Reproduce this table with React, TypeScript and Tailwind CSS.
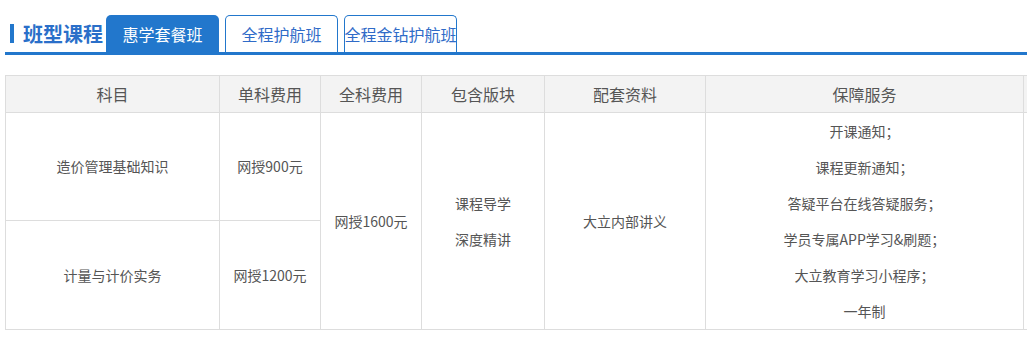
const tabs = ['惠学套餐班', '全程护航班', '全程金钻护航班'];

const services = [
  '开课通知；',
  '课程更新通知；',
  '答疑平台在线答疑服务；',
  '学员专属APP学习&刷题；',
  '大立教育学习小程序；',
  '一年制',
];

const cell = 'border border-[#ddd] text-center align-middle p-0';

export default function App() {
  return (
    <div className="bg-white w-[1027px] h-[350px] overflow-hidden pl-[5px] pt-[15px] font-['Noto_Sans_CJK_SC',sans-serif]">
      {/* Title + tabs */}
      <div className="flex items-end border-b-[3px] border-[#2277cc]">
        <div className="flex items-center w-[101px] h-[37px] shrink-0">
          <span className="ml-[5px] w-[4px] h-[19px] bg-[#2277cc]" />
          <span className="ml-[9px] text-[20px] leading-[24px] font-bold text-[#2a6fc9] whitespace-nowrap">
            班型课程
          </span>
        </div>
        <div className="flex gap-[6px]">
          {tabs.map((name, i) => (
            <div
              key={name}
              className={
                i === 0
                  ? 'w-[113px] h-[37px] rounded-t-[5px] bg-[#2277cc] text-white text-[16px] flex items-center justify-center whitespace-nowrap'
                  : 'w-[113px] h-[37px] rounded-t-[5px] border border-b-0 border-[#2277cc] text-[#2f6bc8] text-[16px] flex items-center justify-center whitespace-nowrap'
              }
            >
              {name}
            </div>
          ))}
        </div>
      </div>

      {/* Price table */}
      <div className="mt-[20px]">
        <table className="table-fixed border-collapse w-[1119px] text-[14px] text-[#555]">
          <colgroup>
            <col className="w-[214px]" />
            <col className="w-[101px]" />
            <col className="w-[101px]" />
            <col className="w-[123px]" />
            <col className="w-[161px]" />
            <col className="w-[318px]" />
            <col className="w-[101px]" />
          </colgroup>
          <thead>
            <tr className="bg-[#f3f3f3] h-[37px]">
              {['科目', '单科费用', '全科费用', '包含版块', '配套资料', '保障服务', ''].map((h, i) => (
                <th key={i} className={`${cell} font-normal text-[16px] leading-[20px]`}>
                  {h}
                </th>
              ))}
            </tr>
          </thead>
          <tbody>
            <tr className="h-[108px]">
              <td className={cell}>造价管理基础知识</td>
              <td className={cell}>网授900元</td>
              <td className={cell} rowSpan={2}>网授1600元</td>
              <td className={cell} rowSpan={2}>
                <p className="leading-[36px]">课程导学</p>
                <p className="leading-[36px]">深度精讲</p>
              </td>
              <td className={cell} rowSpan={2}>大立内部讲义</td>
              <td className={cell} rowSpan={2}>
                {services.map((s) => (
                  <p key={s} className="leading-[36px]">{s}</p>
                ))}
              </td>
              <td className={cell} rowSpan={2} />
            </tr>
            <tr className="h-[109px]">
              <td className={cell}>计量与计价实务</td>
              <td className={cell}>网授1200元</td>
            </tr>
          </tbody>
        </table>
      </div>
    </div>
  );
}
